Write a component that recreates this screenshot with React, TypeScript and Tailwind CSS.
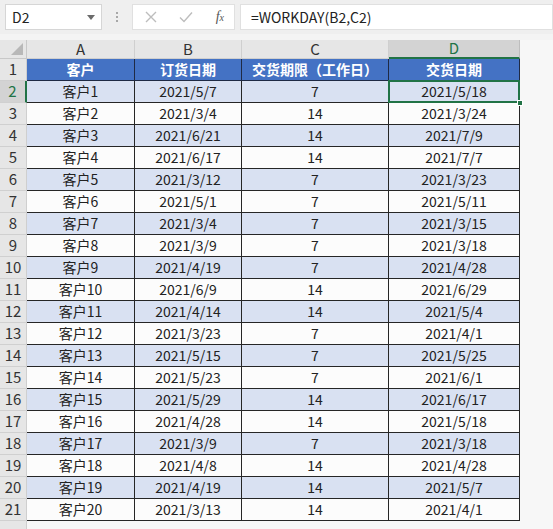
import React from "react";

const rows: [string, string, string, string][] = [
  ["客户1", "2021/5/7", "7", "2021/5/18"],
  ["客户2", "2021/3/4", "14", "2021/3/24"],
  ["客户3", "2021/6/21", "14", "2021/7/9"],
  ["客户4", "2021/6/17", "14", "2021/7/7"],
  ["客户5", "2021/3/12", "7", "2021/3/23"],
  ["客户6", "2021/5/1", "7", "2021/5/11"],
  ["客户7", "2021/3/4", "7", "2021/3/15"],
  ["客户8", "2021/3/9", "7", "2021/3/18"],
  ["客户9", "2021/4/19", "7", "2021/4/28"],
  ["客户10", "2021/6/9", "14", "2021/6/29"],
  ["客户11", "2021/4/14", "14", "2021/5/4"],
  ["客户12", "2021/3/23", "7", "2021/4/1"],
  ["客户13", "2021/5/15", "7", "2021/5/25"],
  ["客户14", "2021/5/23", "7", "2021/6/1"],
  ["客户15", "2021/5/29", "14", "2021/6/17"],
  ["客户16", "2021/4/28", "14", "2021/5/18"],
  ["客户17", "2021/3/9", "7", "2021/3/18"],
  ["客户18", "2021/4/8", "14", "2021/4/28"],
  ["客户19", "2021/4/19", "14", "2021/5/7"],
  ["客户20", "2021/3/13", "14", "2021/4/1"],
];

const font = { fontFamily: '"Noto Sans CJK SC", "Noto Sans", sans-serif' };

export default function App() {
  return (
    <div
      className="w-[553px] h-[529px] bg-[#f7f7f7] overflow-hidden text-[#222]"
      style={font}
    >
      {/* formula bar */}
      <div className="h-[34px] bg-[#efefef] flex items-center pl-[5px] gap-0">
        <div className="w-[97px] h-[26px] bg-white border border-[#d6d6d6] flex items-center justify-between pl-[6px] pr-[6px]">
          <span className="text-[14px] leading-none">D2</span>
          <svg width="8" height="5" viewBox="0 0 8 5">
            <path d="M0 0h8L4 5z" fill="#6b6b6b" />
          </svg>
        </div>
        <div className="w-[30px] flex flex-col items-center gap-[2px]">
          <span className="w-[2px] h-[2px] bg-[#a8a8a8]" />
          <span className="w-[2px] h-[2px] bg-[#a8a8a8]" />
          <span className="w-[2px] h-[2px] bg-[#a8a8a8]" />
        </div>
        <div className="w-[103px] h-[26px] bg-white border border-[#e0e0e0] flex items-center justify-between pl-[12px] pr-[10px]">
          <svg width="12" height="12" viewBox="0 0 12 12">
            <path d="M1 1l10 10M11 1L1 11" stroke="#bdbdbd" strokeWidth="1.4" />
          </svg>
          <svg width="14" height="12" viewBox="0 0 14 12">
            <path d="M1 6.5l4 4L13 1.5" stroke="#bdbdbd" strokeWidth="1.4" fill="none" />
          </svg>
          <span
            className="text-[14px] italic text-[#555] leading-none"
            style={{ fontFamily: '"Liberation Serif", serif' }}
          >
            f<span className="text-[10px]">x</span>
          </span>
        </div>
        <div className="ml-[5px] flex-1 h-[26px] bg-white border border-[#e0e0e0] flex items-center pl-[10px]">
          <span className="text-[14px] leading-none">=WORKDAY(B2,C2)</span>
        </div>
      </div>
      <div className="h-[6px] bg-[#f4f4f4]" />
      {/* sheet */}
      <div className="grid grid-cols-[27px_108px_107px_147px_131px] w-fit">
        {/* column headers */}
        <div className="h-[19px] bg-[#e6e6e6] border-r border-b border-[#c8c8c8] relative">
          <svg className="absolute right-[3px] bottom-[3px]" width="12" height="12" viewBox="0 0 12 12">
            <path d="M12 0V12H0z" fill="#b8b8b8" />
          </svg>
        </div>
        {["A", "B", "C"].map((c) => (
          <div
            key={c}
            className="h-[19px] bg-[#e6e6e6] border-r border-b border-[#cfcfcf] flex items-center justify-center text-[15px] text-[#333]"
          >
            {c}
          </div>
        ))}
        <div className="h-[19px] bg-[#d3d3d3] border-r border-b-2 border-b-[#217346] border-r-[#bdbdbd] flex items-center justify-center text-[15px] text-[#217346]">
          D
        </div>
        {/* header row 1 */}
        <div className="h-[22px] bg-[#e6e6e6] border-r border-b border-[#cfcfcf] flex items-center justify-center text-[15px] text-[#333]">
          1
        </div>
        {["客户", "订货日期", "交货期限（工作日）"].map((h) => (
          <div
            key={h}
            className="h-[22px] bg-[#4472c4] border-r border-b border-[#1f2a44] flex items-center justify-center text-[14px] font-bold text-white"
          >
            {h}
          </div>
        ))}
        <div className="h-[22px] bg-[#4472c4] border-r border-b border-[#1f2a44] flex items-center justify-center text-[14px] font-bold text-white">
          交货日期
        </div>
        {rows.map((r, i) => {
          const n = i + 2;
          const shade = n % 2 === 0 ? "bg-[#d9e1f2]" : "bg-[#fcfcfc]";
          const sel = n === 2;
          return (
            <React.Fragment key={n}>
              <div
                className={`h-[22px] border-b border-[#d0d0d0] flex items-center justify-center text-[15px] text-[#333] ${
                  sel
                    ? "bg-[#d3d3d3] border-r-2 border-r-[#217346] text-[#217346]"
                    : "bg-[#e6e6e6] border-r border-r-[#cfcfcf]"
                }`}
              >
                {n}
              </div>
              {r.map((v, j) => (
                <div
                  key={j}
                  className={`h-[22px] border-r border-b border-[#262626] flex items-center justify-center text-[14px] text-[#222] ${shade} ${
                    sel && j === 3 ? "relative" : ""
                  }`}
                >
                  {v}
                  {sel && j === 3 && (
                    <>
                      <div className="absolute left-[-1px] top-[-1px] right-[-1px] bottom-[-1px] border-2 border-[#217346]" />
                      <div className="absolute right-[-4px] bottom-[-4px] w-[6px] h-[6px] bg-[#217346] border border-white" />
                    </>
                  )}
                </div>
              ))}
            </React.Fragment>
          );
        })}
        <div className="h-[10px] bg-[#e6e6e6] border-r border-[#cfcfcf]" />
      </div>
    </div>
  );
}
